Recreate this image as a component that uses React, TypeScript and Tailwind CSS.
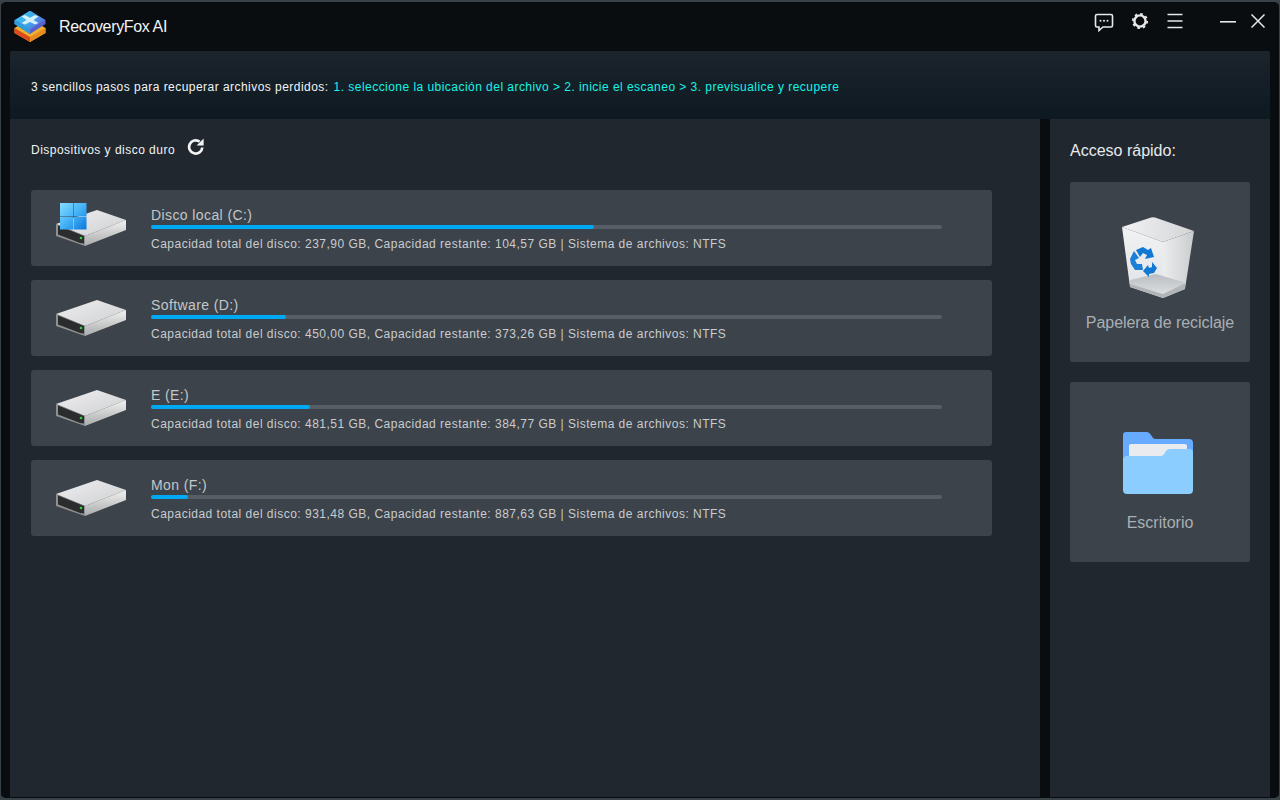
const font = "font-['Liberation_Sans',Arial,sans-serif]";

const discos = [
	{ nome: "Disco local (C:)", total: "237,90", resto: "104,57", uso: 443, windows: true },
	{ nome: "Software (D:)", total: "450,00", resto: "373,26", uso: 135, windows: false },
	{ nome: "E (E:)", total: "481,51", resto: "384,77", uso: 159, windows: false },
	{ nome: "Mon (F:)", total: "931,48", resto: "887,63", uso: 37, windows: false },
];

function Logo() {
	return (
		<svg width="32" height="32" viewBox="0 0 32 32">
			<defs>
				<linearGradient id="logoTop" x1="0" y1="0" x2="1" y2="0.6">
					<stop offset="0" stopColor="#35c8f0" />
					<stop offset="0.6" stopColor="#3fa8ea" />
					<stop offset="1" stopColor="#5a6ddc" />
				</linearGradient>
			</defs>
			<path d="M0.5 18 L16 9 L31.5 18 V23 L16 32 L0.5 23 Z" fill="#eeb02f" strokeLinejoin="round" />
			<path d="M0.5 18 L16 27 V32 L0.5 23 Z" fill="#de4a1c" />
			<path d="M16 27 L31.5 18 V23 L16 32 Z" fill="#e48a1e" />
			<path d="M0.5 14 V10 L16 1 L31.5 10 V14 L16 24 Z" fill="#5a5fd0" />
			<path d="M0.5 14 V10 L16 19.5 V24 Z" fill="#2f9fd8" />
			<path d="M1 10 L15 1.2 Q16 0.6 17 1.2 L31 10 L16 19.5 Z" fill="url(#logoTop)" />
			<path d="M7.5 6.5 L11 5 L16 7.8 L21 5 L24.5 6.5 L19.5 10 L24.5 13 L21 14.6 L16 12 L11 14.6 L7.5 13 L12.5 10 Z" fill="#d4f0fb" />
		</svg>
	);
}

function Disco({ windows }: { windows: boolean }) {
	return (
		<svg width="70" height="43" viewBox="0 -7 70 43" className="shrink-0">
			<defs>
				<linearGradient id="discoTopo" x1="0" y1="0" x2="1" y2="1">
					<stop offset="0" stopColor="#eeeeef" />
					<stop offset="1" stopColor="#cfd0d3" />
				</linearGradient>
				<linearGradient id="discoLado" x1="0" y1="0" x2="0" y2="1">
					<stop offset="0" stopColor="#f2f2f2" />
					<stop offset="1" stopColor="#a9aaab" />
				</linearGradient>
				<linearGradient id="janela" x1="0" y1="0" x2="1" y2="1">
					<stop offset="0" stopColor="#86dcff" />
					<stop offset="0.5" stopColor="#45b2f6" />
					<stop offset="1" stopColor="#0b76dc" />
				</linearGradient>
			</defs>
			<path d="M0 14 L41 0 L70 10 L29 26 Z" fill="url(#discoTopo)" />
			<path d="M29 26 L70 10 V20 L29 36 Z" fill="url(#discoLado)" />
			<path d="M0 14 L29 26 V36 L0 26 Z" fill="#8f9090" />
			<path d="M2 15.5 L28 26 V33.5 L24 33 L2 24.5 Z" fill="#2b2c2d" />
			<circle cx="25" cy="28" r="1.3" fill="#2fd13c" />
			{windows && (
				<path d="M4 -7 H17 V6 H4 Z M17.5 -7 H30.5 V6 H17.5 Z M4 6.5 H17 V19.5 H4 Z M17.5 6.5 H30.5 V19.5 H17.5 Z" fill="url(#janela)" />
			)}
		</svg>
	);
}

function Lixeira() {
	return (
		<svg width="72" height="81" viewBox="0 0 72 81">
			<defs>
				<linearGradient id="lixoFrente" x1="0" y1="0" x2="0" y2="1">
					<stop offset="0" stopColor="#f1f2f3" />
					<stop offset="1" stopColor="#dfe2e5" />
				</linearGradient>
				<linearGradient id="lixoLado" x1="0" y1="0" x2="1" y2="0">
					<stop offset="0" stopColor="#eceded" />
					<stop offset="1" stopColor="#c9ccce" />
				</linearGradient>
				<linearGradient id="lixoFundo" x1="0" y1="0" x2="0" y2="1">
					<stop offset="0" stopColor="#b9bcc0" />
					<stop offset="1" stopColor="#dcdee0" />
				</linearGradient>
				<linearGradient id="lixoInterno" x1="0" y1="0" x2="1" y2="0">
					<stop offset="0" stopColor="#f2f2f3" />
					<stop offset="1" stopColor="#d2d4d6" />
				</linearGradient>
			</defs>
			<path d="M0 10 L29 0.6 Q31 0 33 0.6 L72 14 L41 25 Z" fill="url(#lixoInterno)" />
			<path d="M0 10 L41 25 V81 L8 70 Z" fill="url(#lixoFrente)" />
			<path d="M41 25 L72 14 L63 72 L41 81 Z" fill="url(#lixoLado)" />
			<path d="M8 64 L34 58 L63 66 V72 L41 81 L8 70 Z" fill="#b2b5b8" />
			<path d="M8 63 L34 57 L64 66 L41 77 L8 67 Z" fill="url(#lixoFundo)" />
			<path d="M14 33 L21 30 L26 33 L29 31 L32 40 L23 42 L25 38 L21 36 L18 40 Z" fill="#1178d4" strokeLinejoin="round" />
			<path d="M12 34 L8 42 L9 47 L13 53 L21 53 L20 47 L15 47 L13 43 L17 41 Z" fill="#1b7fd8" strokeLinejoin="round" />
			<path d="M30 45 L35 51 L32 56 L27 57 L27 60 L21 54 L26 48 L27 51 L30 50 Z" fill="#1178d4" strokeLinejoin="round" />
		</svg>
	);
}

function Pasta() {
	return (
		<svg width="70" height="63" viewBox="0 0 70 63">
			<path d="M3 0 H24 Q26 0 28 3 L30 6 Q31 7 33 7 H66 Q70 7 70 11 V40 H0 V3 Q0 0 3 0 Z" fill="#66abff" />
			<rect x="6" y="12" width="58" height="18" rx="2" fill="#e9ebee" />
			<path d="M0 28 Q0 24 4 24 H38 Q40 24 41 22 L43 19 Q44 17 47 17 H66 Q70 17 70 21 V58 Q70 62 66 62 H4 Q0 62 0 58 Z" fill="#8ccdff" />
		</svg>
	);
}

function BotoesJanela() {
	return (
		<div className="flex items-start">
			<svg width="20" height="20" viewBox="0 0 20 20" fill="none" className="mt-[11px]">
				<path d="M3 1.5 H17 Q18.5 1.5 18.5 3 V12.5 Q18.5 14 17 14 H9 L5 17.5 V14 H3 Q1.5 14 1.5 12.5 V3 Q1.5 1.5 3 1.5 Z" stroke="#e8e8e8" strokeWidth="1.6" />
				<circle cx="6.5" cy="7.8" r="1" fill="#e8e8e8" />
				<circle cx="10" cy="7.8" r="1" fill="#e8e8e8" />
				<circle cx="13.5" cy="7.8" r="1" fill="#e8e8e8" />
			</svg>
			<svg width="18" height="18" viewBox="0 0 18 18" fill="none" className="ml-[17px] mt-[10px]">
				<circle cx="9" cy="9" r="5.6" stroke="#e8e8e8" strokeWidth="2.4" />
				<circle cx="9" cy="9" r="7.2" stroke="#e8e8e8" strokeWidth="1.8" strokeDasharray="2.6 3.05" />
			</svg>
			<svg width="16" height="16" viewBox="0 0 16 16" fill="none" stroke="#e8e8e8" strokeWidth="1.6" className="ml-[18px] mt-[11px]">
				<path d="M0.5 1.5 H15.5 M0.5 8 H15.5 M0.5 14.5 H15.5" />
			</svg>
			<svg width="16" height="2" viewBox="0 0 16 2" className="ml-[37px] mt-[19px]">
				<rect width="16" height="1.6" fill="#e8e8e8" />
			</svg>
			<svg width="14" height="14" viewBox="0 0 14 14" fill="none" stroke="#e8e8e8" strokeWidth="1.5" className="ml-[15px] mt-[12px]">
				<path d="M0.5 0.5 L13.5 13.5 M13.5 0.5 L0.5 13.5" />
			</svg>
		</div>
	);
}

function LinhaDisco({ disco }: { disco: (typeof discos)[number] }) {
	return (
		<div className="flex h-[76px] rounded-[3px] bg-[#3c434a] pl-[25px] pt-[13px]">
			<Disco windows={disco.windows} />
			<div className="ml-[25px] w-[791px]">
				<div className="mt-[3px] text-[14px] leading-[18px] tracking-[0.4px] text-[#c3c7cb]">{disco.nome}</div>
				<div className="mt-[1px] h-[4px] rounded-full bg-[#565d65]">
					<div className="h-full rounded-full bg-[#00a9f4]" style={{ width: disco.uso }} />
				</div>
				<div className="mt-[7px] text-[12px] leading-[17px] tracking-[0.49px] text-[#c9ccd0]">
					Capacidad total del disco: {disco.total} GB, Capacidad restante: {disco.resto} GB | Sistema de archivos: NTFS
				</div>
			</div>
		</div>
	);
}

export default function App() {
	return (
		<div className={`${font} h-[800px] w-[1280px] overflow-hidden bg-[#3a4249]`}>
			<div className="flex h-[800px] w-[1280px] flex-col rounded-[6px] border-x border-b-[2px] border-t-[2px] border-[#3a4249] bg-[#0a0d10] pb-[1px] pl-[9px] pr-[9px]">
				<header className="flex h-[49px] shrink-0 justify-between pr-[5px]">
					<div className="flex items-start">
						<div className="ml-[4px] mt-[8px]">
							<Logo />
						</div>
						<span className="ml-[13px] mt-[16px] text-[16px] leading-[18px] tracking-[-0.35px] text-[#f2f4f5]">RecoveryFox AI</span>
					</div>
					<BotoesJanela />
				</header>
				<div className="flex h-[68px] shrink-0 items-center rounded-t-[2px] bg-gradient-to-b from-[#1c242c] to-[#0d1921] pl-[21px] pt-[4px] text-[12px] tracking-[0.46px]">
					<span className="text-[#f2f4f5]">3 sencillos pasos para recuperar archivos perdidos:</span>
					<span className="ml-[5px] text-[#14f3e6]">1. seleccione la ubicación del archivo &gt; 2. inicie el escaneo &gt; 3. previsualice y recupere</span>
				</div>
				<div className="flex min-h-0 flex-1">
					<main className="w-[1030px] bg-[#20272e] pl-[21px]">
						<div className="flex h-[71px] items-start pt-[19px]">
							<span className="mt-[1px] text-[12px] leading-[22px] tracking-[0.48px] text-[#f2f4f5]">Dispositivos y disco duro</span>
							<svg width="18" height="18" viewBox="0 0 18 18" fill="none" className="ml-[12px]">
								<path d="M15.3 9.5 A6.6 6.6 0 1 1 12.6 3.6" stroke="#f2f4f5" strokeWidth="2.7" />
								<path d="M16.6 0.6 V7.6 H9.6 Z" fill="#f2f4f5" />
							</svg>
						</div>
						<div className="flex w-[961px] flex-col gap-[14px]">
							{discos.map((disco) => (
								<LinhaDisco key={disco.nome} disco={disco} />
							))}
						</div>
					</main>
					<aside className="ml-[10px] w-[220px] bg-[#20272e] px-[20px]">
						<div className="pt-[22px] text-[16px] leading-[20px] text-[#e8eaec]">Acceso rápido:</div>
						<div className="mt-[21px] flex flex-col gap-[20px]">
							<div className="flex h-[180px] flex-col items-center rounded-[2px] bg-[#3c434a] pt-[35px]">
								<div className="mr-[4px]">
									<Lixeira />
								</div>
								<span className="mt-[15px] text-[16px] leading-[20px] tracking-[-0.05px] text-[#a9afb5]">Papelera de reciclaje</span>
							</div>
							<div className="flex h-[180px] flex-col items-center rounded-[2px] bg-[#3c434a] pt-[50px]">
								<div className="mr-[4px]">
									<Pasta />
								</div>
								<span className="mt-[18px] text-[16px] leading-[20px] text-[#a9afb5]">Escritorio</span>
							</div>
						</div>
					</aside>
				</div>
			</div>
		</div>
	);
}
